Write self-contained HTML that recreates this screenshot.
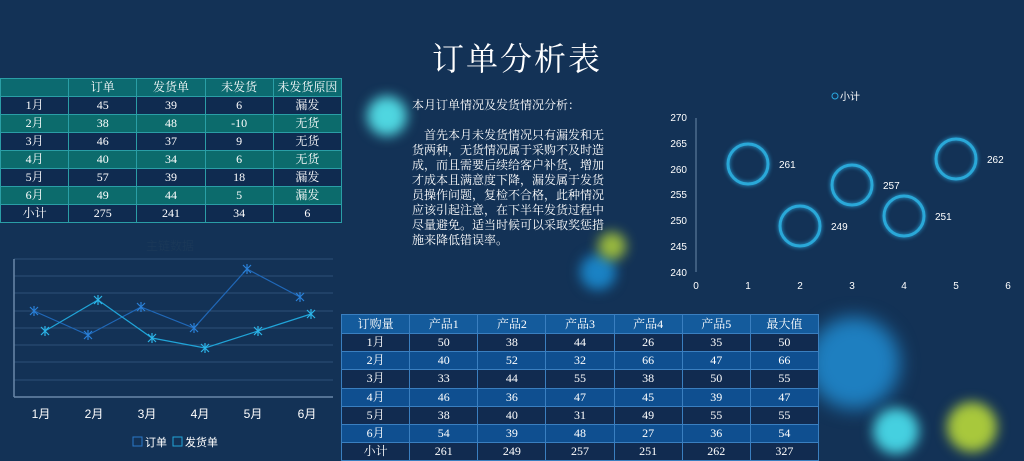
<!DOCTYPE html>
<html><head><meta charset="utf-8"><style>
*{margin:0;padding:0;box-sizing:border-box}
body{width:1024px;height:460px;background:#133256;position:relative;overflow:hidden;font-family:"Liberation Serif","Noto Serif CJK SC",serif;color:#fff}
.blob{position:absolute;border-radius:50%;filter:blur(6px)}
table{border-collapse:collapse;position:absolute;table-layout:fixed}
td{text-align:center;font-size:12px;height:18px;padding:0;line-height:17px}
#t1{left:0;top:78px;width:342px}
#t1 td{border:1px solid #2a9ea6}
#t1 tr.h td{background:#0c6a70;height:18px}
#t1 tr.d td{background:#0f2b50}
#t1 tr.t td{background:#0c6b6c}
#t2{left:341px;top:314px;width:478px}
#t2 td{border:1px solid #3a7fc0;height:18.2px}
#t2 tr.h td{background:#145b9c;height:19px}
#t2 tr.d td{background:#112b50}
#t2 tr.b td{background:#0f4f90}
.sans{font-family:"Liberation Sans","Noto Sans CJK SC",sans-serif}
</style></head><body>
<div class="blob" style="left:367px;top:96px;width:40px;height:40px;background:#4fd6e0"></div>
<div class="blob" style="left:580px;top:254px;width:36px;height:36px;background:#1a82c4"></div>
<div class="blob" style="left:598px;top:232px;width:28px;height:28px;background:#a8c83c;opacity:.9"></div>
<div class="blob" style="left:808px;top:317px;width:92px;height:92px;background:#1e7fc0;filter:blur(9px)"></div>
<div class="blob" style="left:873px;top:408px;width:46px;height:46px;background:#45d0e0"></div>
<div class="blob" style="left:947px;top:402px;width:50px;height:50px;background:#a8c83c"></div>

<div style="position:absolute;left:0;width:1034px;top:34px;text-align:center;font-size:32px;letter-spacing:2px">订单分析表</div>

<table id="t1">
<tr class="h"><td></td><td>订单</td><td>发货单</td><td>未发货</td><td>未发货原因</td></tr>
<tr class="d"><td>1月</td><td>45</td><td>39</td><td>6</td><td>漏发</td></tr>
<tr class="t"><td>2月</td><td>38</td><td>48</td><td>-10</td><td>无货</td></tr>
<tr class="d"><td>3月</td><td>46</td><td>37</td><td>9</td><td>无货</td></tr>
<tr class="t"><td>4月</td><td>40</td><td>34</td><td>6</td><td>无货</td></tr>
<tr class="d"><td>5月</td><td>57</td><td>39</td><td>18</td><td>漏发</td></tr>
<tr class="t"><td>6月</td><td>49</td><td>44</td><td>5</td><td>漏发</td></tr>
<tr class="d"><td>小计</td><td>275</td><td>241</td><td>34</td><td>6</td></tr>
</table>

<div style="position:absolute;left:412px;top:98px;width:196px;font-size:12px;line-height:15px">
<div>本月订单情况及发货情况分析：</div>
<div style="margin-top:15px;text-indent:12px">首先本月未发货情况只有漏发和无货两种，无货情况属于采购不及时造成，而且需要后续给客户补货，增加才成本且满意度下降，漏发属于发货员操作问题，复检不合格，此种情况应该引起注意，在下半年发货过程中尽量避免。适当时候可以采取奖惩措施来降低错误率。</div>
</div>

<svg style="position:absolute;left:0;top:0" width="1024" height="460" class="sans">
<g stroke="#2c5078" stroke-width="1">
<line x1="14" y1="259" x2="333" y2="259"/><line x1="14" y1="276" x2="333" y2="276"/>
<line x1="14" y1="293" x2="333" y2="293"/><line x1="14" y1="311" x2="333" y2="311"/>
<line x1="14" y1="328" x2="333" y2="328"/><line x1="14" y1="345" x2="333" y2="345"/>
<line x1="14" y1="362" x2="333" y2="362"/><line x1="14" y1="380" x2="333" y2="380"/>
</g>
<line x1="14" y1="259" x2="14" y2="397" stroke="#6a88a8" stroke-width="1.5"/>
<line x1="14" y1="397" x2="333" y2="397" stroke="#6a88a8" stroke-width="1.5"/>
<text x="170" y="250" fill="#1a3858" font-size="12" text-anchor="middle">主链数据</text>
<polyline points="34,311 88,335 141,307 194,328 247,269 300,297" fill="none" stroke="#2068b8" stroke-width="1.2"/>
<polyline points="45,331 98,300 152,338 205,348 258,331 311,314" fill="none" stroke="#20a4d8" stroke-width="1.2"/>
<g stroke="#2a80d8" stroke-width="1.2">
<path d="M30 307l8 8M38 307l-8 8M34 306v10M84 331l8 8M92 331l-8 8M88 330v10M137 303l8 8M145 303l-8 8M141 302v10M190 324l8 8M198 324l-8 8M194 323v10M243 265l8 8M251 265l-8 8M247 264v10M296 293l8 8M304 293l-8 8M300 292v10"/>
</g>
<g stroke="#2cb4e8" stroke-width="1.2">
<path d="M41 327l8 8M49 327l-8 8M45 326v10M94 296l8 8M102 296l-8 8M98 295v10M148 334l8 8M156 334l-8 8M152 333v10M201 344l8 8M209 344l-8 8M205 343v10M254 327l8 8M262 327l-8 8M258 326v10M307 310l8 8M315 310l-8 8M311 309v10"/>
</g>
<g fill="#fff" font-size="12" text-anchor="middle">
<text x="41" y="418">1月</text><text x="94" y="418">2月</text><text x="147" y="418">3月</text>
<text x="200" y="418">4月</text><text x="253" y="418">5月</text><text x="307" y="418">6月</text>
</g>
<rect x="133" y="437" width="9" height="9" fill="none" stroke="#2a78c8"/>
<text x="145" y="446" fill="#fff" font-size="11">订单</text>
<rect x="173" y="437" width="9" height="9" fill="none" stroke="#20a4d8"/>
<text x="185" y="446" fill="#fff" font-size="11">发货单</text>

<circle cx="835" cy="96" r="3" fill="none" stroke="#2aa8e0"/>
<text x="840" y="100" fill="#fff" font-size="10">小计</text>
<line x1="696" y1="118" x2="696" y2="272" stroke="#6a88a8" stroke-width="1"/>
<g fill="#fff" font-size="10" text-anchor="end">
<text x="687" y="121">270</text><text x="687" y="147">265</text><text x="687" y="173">260</text>
<text x="687" y="198">255</text><text x="687" y="224">250</text><text x="687" y="250">245</text><text x="687" y="276">240</text>
</g>
<g fill="#fff" font-size="10" text-anchor="middle">
<text x="696" y="289">0</text><text x="748" y="289">1</text><text x="800" y="289">2</text><text x="852" y="289">3</text>
<text x="904" y="289">4</text><text x="956" y="289">5</text><text x="1008" y="289">6</text>
</g>
<g fill="none" stroke="#2aa8d8" stroke-width="3" style="filter:drop-shadow(0 0 2px #2aa8e0)">
<circle cx="748" cy="164" r="20"/><circle cx="800" cy="226" r="20"/><circle cx="852" cy="185" r="20"/>
<circle cx="904" cy="216" r="20"/><circle cx="956" cy="159" r="20"/>
</g>
<g fill="#fff" font-size="10">
<text x="779" y="168">261</text><text x="831" y="230">249</text><text x="883" y="189">257</text>
<text x="935" y="220">251</text><text x="987" y="163">262</text>
</g>
</svg>

<table id="t2">
<tr class="h"><td>订购量</td><td>产品1</td><td>产品2</td><td>产品3</td><td>产品4</td><td>产品5</td><td>最大值</td></tr>
<tr class="d"><td>1月</td><td>50</td><td>38</td><td>44</td><td>26</td><td>35</td><td>50</td></tr>
<tr class="b"><td>2月</td><td>40</td><td>52</td><td>32</td><td>66</td><td>47</td><td>66</td></tr>
<tr class="d"><td>3月</td><td>33</td><td>44</td><td>55</td><td>38</td><td>50</td><td>55</td></tr>
<tr class="b"><td>4月</td><td>46</td><td>36</td><td>47</td><td>45</td><td>39</td><td>47</td></tr>
<tr class="d"><td>5月</td><td>38</td><td>40</td><td>31</td><td>49</td><td>55</td><td>55</td></tr>
<tr class="b"><td>6月</td><td>54</td><td>39</td><td>48</td><td>27</td><td>36</td><td>54</td></tr>
<tr class="d"><td>小计</td><td>261</td><td>249</td><td>257</td><td>251</td><td>262</td><td>327</td></tr>
</table>
</body></html>
